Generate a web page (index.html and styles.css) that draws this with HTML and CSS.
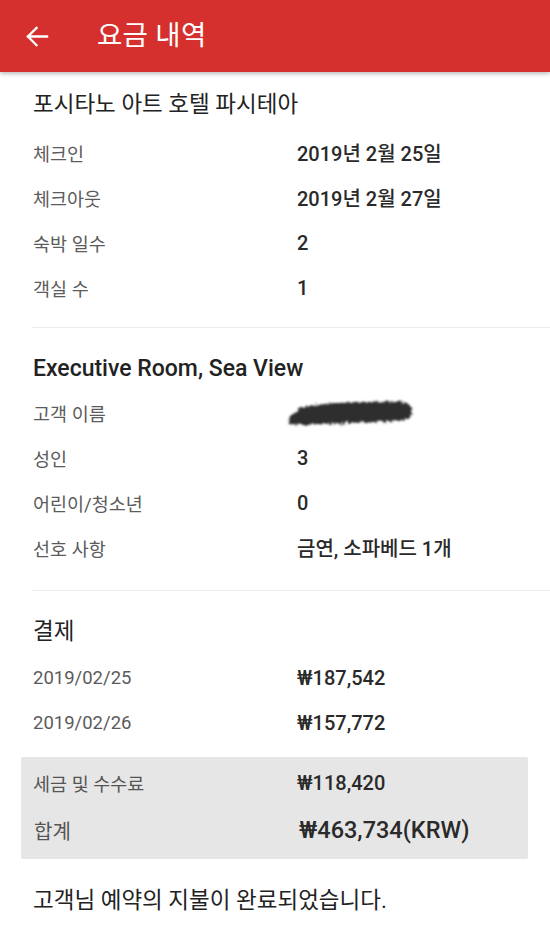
FILE: index.html
```html
<!DOCTYPE html>
<html lang="ko">
<head>
<meta charset="utf-8">
<title>요금 내역</title>
<link rel="stylesheet" href="styles.css">
</head>
<body>
<header class="appbar">
  <svg class="back" width="24" height="24" viewBox="0 0 24 24" aria-hidden="true">
    <path d="M2 12H22M11 3L2 12L11 21" fill="none" stroke="#fff" stroke-width="2.4" stroke-linecap="square"/>
  </svg>
  <h1 class="appbar-title">요금 내역</h1>
</header>

<main>
  <section class="section s1">
    <h2 class="sec-title">포시타노 아트 호텔 파시테아</h2>
    <div class="rows">
      <div class="row"><span class="label">체크인</span><span class="value">2019년 2월 25일</span></div>
      <div class="row"><span class="label">체크아웃</span><span class="value">2019년 2월 27일</span></div>
      <div class="row"><span class="label">숙박 일수</span><span class="value">2</span></div>
      <div class="row"><span class="label">객실 수</span><span class="value">1</span></div>
    </div>
  </section>

  <section class="section s2">
    <h2 class="sec-title en">Executive Room, Sea View</h2>
    <div class="rows">
      <div class="row"><span class="label">고객 이름</span><span class="value">
        <svg class="redact" width="130" height="32" viewBox="0 0 130 32" aria-hidden="true">
          <defs>
            <filter id="rough" x="-10%" y="-30%" width="120%" height="160%">
              <feTurbulence type="fractalNoise" baseFrequency="0.3" numOctaves="2" seed="3" result="n"/>
              <feDisplacementMap in="SourceGraphic" in2="n" scale="6" xChannelSelector="R" yChannelSelector="G" result="d"/>
              <feGaussianBlur in="d" stdDeviation="1.1"/>
            </filter>
          </defs>
          <path d="M3 25 C6 14 18 8 40 7 C60 5 92 4 112 5 C122 5 127 8 127 15 C127 22 120 24 110 24 C90 25 60 26 40 27 C22 28 6 29 3 25 Z" fill="#2e2e2e" filter="url(#rough)"/>
        </svg>
      </span></div>
      <div class="row"><span class="label">성인</span><span class="value">3</span></div>
      <div class="row"><span class="label">어린이/청소년</span><span class="value">0</span></div>
      <div class="row"><span class="label">선호 사항</span><span class="value">금연, 소파베드 1개</span></div>
    </div>
  </section>

  <section class="section s3">
    <h2 class="sec-title">결제</h2>
    <div class="rows">
      <div class="row"><span class="label">2019/02/25</span><span class="value">₩187,542</span></div>
      <div class="row"><span class="label">2019/02/26</span><span class="value">₩157,772</span></div>
    </div>
  </section>

  <div class="totals">
    <div class="row t-row"><span class="label">세금 및 수수료</span><span class="value">₩118,420</span></div>
    <div class="row t-row total"><span class="label">합계</span><span class="value">₩463,734(KRW)</span></div>
  </div>

  <p class="done">고객님 예약의 지불이 완료되었습니다.</p>
</main>
</body>
</html>
```

FILE: styles.css
```css
* { box-sizing: border-box; }
html, body { margin: 0; padding: 0; }
body {
  width: 550px;
  background: #fff;
  font-family: Roboto, "Noto Sans CJK KR", "Noto Sans", sans-serif;
  color: #222;
}

.appbar {
  height: 72px;
  background: #d5302e;
  display: flex;
  align-items: center;
  padding-left: 26px;
  box-shadow: 0 2px 4px rgba(0,0,0,0.25);
  position: relative;
  z-index: 1;
}
.back { width: 23px; height: 23px; display: block; }
.appbar-title {
  margin: 0 0 0 48px;
  font-size: 27.5px;
  font-weight: 400;
  color: #fff;
  line-height: 30px;
  letter-spacing: 0.3px;
}

.section {
  margin-left: 32px;
  padding-left: 1px;
  border-bottom: 1.5px solid #ececec;
}
.sec-title {
  margin: 0;
  font-size: 22.5px;
  line-height: 30px;
  font-weight: 400;
  color: #222;
}
.sec-title.en { font-weight: 500; font-size: 23px; }

.rows { display: flex; flex-direction: column; }
.row {
  display: grid;
  grid-template-columns: 264px 1fr;
  height: 45px;
  align-items: center;
}
.label { font-size: 18.5px; color: #5b5b5b; }
.value { font-size: 20px; font-weight: 500; color: #2a2a2a; }

.s1 { padding-top: 17px; padding-bottom: 17px; }
.s1 .rows { margin-top: 11px; }
.s2 { padding-top: 26px; padding-bottom: 20px; }
.s2 .rows { margin-top: 6px; }
.s3 { border-bottom: none; padding-top: 25px; }
.s3 .rows { margin-top: 9px; }

.redact {
  display: block;
  width: 130px;
  height: 32px;
  margin-left: -12px;
}

.totals {
  margin: 12px 22px 0 21px;
  padding: 3px 0 4px 12px;
  background: #e6e6e6;
  border-radius: 2px;
}
.t-row .label { color: #555; }
.total { height: 50px; }
.total .label { font-size: 20px; padding-left: 1px; }
.total .value { font-size: 23.5px; padding-left: 2px; }

.done {
  margin: 26px 0 0 33px;
  font-size: 22.5px;
  line-height: 30px;
  color: #222;
}
```
